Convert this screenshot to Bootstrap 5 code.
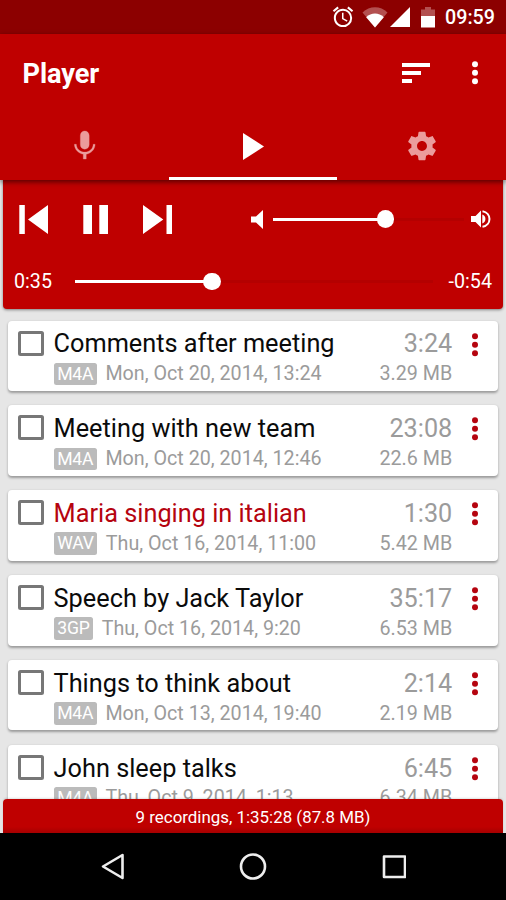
<!DOCTYPE html>
<html lang="en">
<head>
<meta charset="utf-8">
<meta name="viewport" content="width=device-width, initial-scale=1">
<title>Player</title>
<link href="https://cdn.jsdelivr.net/npm/bootstrap@5.3.0/dist/css/bootstrap.min.css" rel="stylesheet">
<style>
:root{--red:#bf0000;--grey:#9b9b9b}
body{font-family:Roboto,"Liberation Sans",sans-serif;font-size:19.7px;line-height:1.2;background:#e6e6e6}
svg{display:block;flex:none}
.screen{width:506px;height:900px}
.status{height:34px;background:#8c0000;padding:0 11px 0 332px;font-weight:500}
.status .clock{padding-top:2px}
.appbar{background:var(--red);height:146px;z-index:2;box-shadow:0 2px 5px rgba(0,0,0,.55)}
.titlebar{height:78px;padding:0 27px 0 22.5px}
.titlebar h1{font-size:27.2px;letter-spacing:-.1px;padding-top:2px}
.tabs{height:68px}
.tabs .nav-link{padding:3px 0 0;border-bottom:3px solid transparent;color:#eb9c9c}
.tabs .nav-link.active{border-color:#fff;color:#fff}
.panel{background:var(--red);margin:0 3px;height:129px;border-radius:0 0 4px 4px;box-shadow:0 1px 3px rgba(0,0,0,.45);padding:20px 11px 0 11px}
.controls{height:38px;padding-left:5px}
.slider{height:3px;background:rgba(80,0,0,.09)}
.fill{height:3px;background:#fff}
.knob{width:17.4px;height:17.4px;margin-left:-8.7px;flex:none}
.seek{height:24px;margin-top:31.5px}
.recordings{padding:11.5px 8.3px 0;min-height:0}
.rec{height:70.6px;margin-bottom:14.25px;border:0;border-radius:4px;box-shadow:0 1.5px 2.5px rgba(0,0,0,.33);padding:10px 20px 0 10px}
.check.form-check-input{width:25.5px;height:25px;border:3px solid #777;border-radius:2.5px;margin:0;flex:none;background:#fff}
.name{font-size:25.3px;line-height:30px;margin-top:-1.2px;color:#0b0b0b}
.name.current{color:#b5040f}
.time{font-size:25.2px;line-height:30px;margin-top:-1.2px;color:var(--grey)}
.meta{height:23px;color:var(--grey);margin-top:3.2px}
.format{height:22.5px;background:#bbb;border-radius:2.5px;font-size:17.6px;letter-spacing:-.2px;padding:0 3.6px;line-height:23.5px;color:#fff}
.dots{color:#b5040f}
.footbar{height:34px;margin:0 3px;background:linear-gradient(var(--red) 82%,#a60000);border-radius:4px 4px 0 0;font-size:16.9px;z-index:2;box-shadow:0 -1px 2px rgba(0,0,0,.12);padding-top:2px}
.navkeys{height:67px;padding:0 100.5px}
</style>
</head>
<body>
<svg class="d-none">
<symbol id="more" viewBox="0 0 6 24"><g fill="currentColor"><circle cx="3" cy="3.3" r="3"/><circle cx="3" cy="11.8" r="3"/><circle cx="3" cy="20.3" r="3"/></g></symbol>
</svg>
<div class="screen d-flex flex-column overflow-hidden">
  <div class="status flex-shrink-0 d-flex align-items-center text-white">
    <svg width="22" height="22" viewBox="1.2 1.3 21.6 21.6" fill="currentColor"><path d="M22 5.72l-4.6-3.86-1.29 1.53 4.6 3.86L22 5.72zM7.88 3.39L6.6 1.86 2 5.71l1.29 1.53 4.59-3.85zM12.5 8H11v6l4.75 2.85.75-1.23-4-2.37V8zM12 4c-4.97 0-9 4.03-9 9s4.02 9 9 9a9 9 0 0 0 0-18zm0 16c-3.87 0-7-3.13-7-7s3.13-7 7-7 7 3.13 7 7-3.13 7-7 7z"/></svg>
    <svg class="ms-2" width="26" height="21" viewBox="0 0 26 21"><path d="M0.500 5.500C7.500-1.500 18.500-1.500 25.500 5.500L13 20.500z" fill="#b35050"/><path d="M4.200 10.200C9 5.300 17 5.300 21.800 10.200L13 20.500z" fill="#fff"/></svg>
    <svg width="20" height="20" viewBox="0 0 20 20" style="margin-left:2px"><path d="M0 20L20 0V20z" fill="#fff"/></svg>
    <svg width="14" height="21" viewBox="0 0 14 21" style="margin-left:11px"><path d="M0 2.500H4V0H10V2.500H14V9H0z" fill="#b35050"/><path d="M0 9H14V20.500H0z" fill="#fff"/></svg>
    <span class="clock ms-auto">09:59</span>
  </div>

  <header class="appbar flex-shrink-0 position-relative text-white">
    <div class="titlebar d-flex align-items-center">
      <h1 class="fw-bold m-0 me-auto">Player</h1>
      <svg width="28" height="20" viewBox="0 0 28 20" fill="#fff"><path d="M0 0H28V4H0zM0 8H19V12H0zM0 16H10V20H0z"/></svg>
      <svg width="7" height="24" viewBox="0 0 7 24" style="margin-left:42px"><use href="#more" width="6" height="24"/></svg>
    </div>
    <nav class="tabs nav nav-fill">
      <a class="nav-link col-4 d-flex align-items-center justify-content-center" href="#" aria-label="Record"><svg width="35.5" height="35.5" viewBox="0 0 24 24" fill="currentColor"><path d="M12 14.300c1.660 0 3-1.340 3-3V5c0-1.660-1.340-3-3-3S9 3.340 9 5v6.300c0 1.660 1.340 3 3 3zm5.700-3.300c0 3-2.540 5.300-5.700 5.300S6.300 14 6.300 11H5c0 3.410 2.720 6.230 6 6.720V21h2v-3.280c3.280-.480 6-3.300 6-6.720h-1.300z" stroke="currentColor" stroke-width=".2"/></svg></a>
      <a class="nav-link active col-4 d-flex align-items-center justify-content-center" href="#" aria-label="Player"><svg width="21" height="27" viewBox="0 0 21 27" fill="currentColor"><path d="M0 0L21 13.500L0 27z"/></svg></a>
      <a class="nav-link col-4 d-flex align-items-center justify-content-center" href="#" aria-label="Settings"><svg width="34" height="34" viewBox="0 0 24 24" fill="currentColor"><path d="M19.430 12.980c.040-.320.070-.640.070-.980s-.030-.660-.070-.980l2.110-1.650c.190-.150.240-.420.120-.640l-2-3.460c-.120-.220-.390-.300-.610-.220l-2.490 1c-.520-.400-1.080-.730-1.690-.980l-.380-2.650C14.460 2.180 14.250 2 14 2h-4c-.250 0-.460.180-.490.420l-.380 2.650c-.610.250-1.170.590-1.690.980l-2.490-1c-.230-.090-.490 0-.610.220l-2 3.460c-.130.220-.070.490.120.640l2.110 1.650c-.040.320-.070.650-.070.980s.030.660.070.980l-2.110 1.650c-.190.150-.240.420-.120.640l2 3.460c.120.220.390.300.610.220l2.490-1c.520.400 1.080.730 1.690.980l.380 2.650c.030.240.240.420.490.420h4c.250 0 .460-.180.490-.420l.380-2.650c.610-.250 1.170-.590 1.690-.980l2.490 1c.230.090.490 0 .610-.220l2-3.460c.120-.220.070-.490-.120-.640l-2.110-1.650zM12 15.500c-1.930 0-3.500-1.570-3.500-3.500s1.570-3.500 3.500-3.500 3.500 1.570 3.500 3.500-1.570 3.500-3.500 3.500z"/></svg></a>
    </nav>
  </header>

  <section class="panel flex-shrink-0 text-white">
    <div class="controls d-flex align-items-center">
      <svg width="154" height="29" viewBox="0 0 154 29" fill="#fff"><path d="M0.300 0H5.800V29H0.300zM29 0V29L9 14.500zM64.300 0H73V29H64.300zM80.300 0H89V29H80.300zM124 0L144.300 14.500L124 29zM147.500 0H153V29H147.500z"/></svg>
      <svg width="12" height="19" viewBox="0 0 12 19" fill="#fff" style="margin-left:77.500px"><path d="M0 6.500H5L12 0V19L5 12.500H0z"/></svg>
      <div class="slider d-flex align-items-center" style="width:191px;margin-left:10px"><div class="fill" style="width:113px"></div><div class="knob rounded-circle bg-white"></div></div>
      <svg width="20" height="18" viewBox="0 0 20 18" fill="#fff" style="margin-left:7.500px"><path d="M0 6H4.500L10 0.500V17.500L4.500 12H0zM11.300 4.500C15.500 5.500 15.500 12.500 11.300 13.500z"/><path d="M11.500 1.200C20.800 2.800 20.800 15.200 11.500 16.800" fill="none" stroke="#fff" stroke-width="2"/></svg>
    </div>
    <div class="seek d-flex align-items-center">
      <span>0:35</span>
      <div class="slider d-flex align-items-center" style="width:358px;margin-left:23px"><div class="fill" style="width:137px"></div><div class="knob rounded-circle bg-white"></div></div>
      <span class="ms-auto">-0:54</span>
    </div>
  </section>

  <main class="recordings flex-grow-1 overflow-hidden" id="list"></main>

  <footer class="footbar flex-shrink-0 position-relative d-flex align-items-center justify-content-center text-white">9 recordings, 1:35:28 (87.8 MB)</footer>
  <nav class="navkeys flex-shrink-0 bg-black d-flex align-items-center justify-content-between">
    <svg width="24" height="28" viewBox="0 0 24 28" fill="none" stroke="#eee" stroke-width="2.600" stroke-linejoin="round"><path d="M2 13.500L21.500 2V25z"/></svg>
    <svg width="28" height="28" viewBox="0 0 28 28" fill="none" stroke="#eee" stroke-width="2.600"><circle cx="14" cy="13.500" r="12"/></svg>
    <svg width="24" height="24" viewBox="0 0 24 24" fill="none" stroke="#eee" stroke-width="2.600" stroke-linejoin="round"><path d="M2 1.500H23V22H2z"/></svg>
  </nav>
</div>
<script src="https://cdn.jsdelivr.net/npm/bootstrap@5.3.0/dist/js/bootstrap.bundle.min.js"></script>
<script>
const recordings = [
  ["Comments after meeting","M4A","Mon, Oct 20, 2014, 13:24","3:24","3.29 MB"],
  ["Meeting with new team","M4A","Mon, Oct 20, 2014, 12:46","23:08","22.6 MB"],
  ["Maria singing in italian","WAV","Thu, Oct 16, 2014, 11:00","1:30","5.42 MB","current"],
  ["Speech by Jack Taylor","3GP","Thu, Oct 16, 2014, 9:20","35:17","6.53 MB"],
  ["Things to think about","M4A","Mon, Oct 13, 2014, 19:40","2:14","2.19 MB"],
  ["John sleep talks","M4A","Thu, Oct 9, 2014, 1:13","6:45","6.34 MB"]
];
document.getElementById("list").innerHTML = recordings.map(([name, format, date, time, size, state = ""]) => `
<article class="card rec flex-row align-items-start">
  <input class="form-check-input check" type="checkbox" aria-label="${name}">
  <div class="flex-grow-1" style="margin-left:9.800px">
    <div class="name ${state}">${name}</div>
    <div class="meta d-flex align-items-center"><span class="format">${format}</span><span style="margin-left:8.500px">${date}</span></div>
  </div>
  <div class="text-end">
    <div class="time">${time}</div>
    <div class="meta d-flex align-items-center justify-content-end">${size}</div>
  </div>
  <svg class="dots" width="6" height="24" style="margin:2px 0 0 19.500px"><use href="#more"/></svg>
</article>`).join("");
</script>
</body>
</html>
